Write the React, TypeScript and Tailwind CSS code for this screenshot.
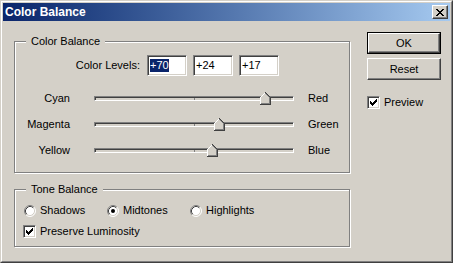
import React from 'react'

const sunken =
  'border-t border-l border-t-[#808080] border-l-[#808080] border-b border-r border-b-white border-r-white shadow-[inset_1px_1px_0_#404040,inset_-1px_-1px_0_#d4d0c8]'
const raised =
  'border-t border-l border-t-white border-l-white border-b border-r border-b-[#404040] border-r-[#404040] shadow-[inset_-1px_-1px_0_#808080]'
const etched = 'border border-[#808080] shadow-[inset_1px_1px_0_#fff,1px_1px_0_#fff]'

const CHECK = ['......x', '.....xx', 'x...xxx', 'xx.xxx.', 'xxxxx..', '.xxx...', '..x....']
const CLOSE = ['xx....xx', '.xx..xx.', '..xxxx..', '...xx...', '..xxxx..', '.xx..xx.', 'xx....xx']

function PixelGlyph({ rows }: { rows: string[] }) {
  const w = rows[0].length
  return (
    <svg width={w} height={rows.length} shapeRendering="crispEdges">
      {rows.map((r, y) =>
        r.split('').map((c, x) => (c === 'x' ? <rect key={`${x}-${y}`} x={x} y={y} width={1} height={1} fill="#000" /> : null))
      )}
    </svg>
  )
}

function Checkbox() {
  return (
    <div className={`w-[13px] h-[13px] shrink-0 bg-white flex items-center justify-center ${sunken}`}>
      <PixelGlyph rows={CHECK} />
    </div>
  )
}

function Radio({ checked }: { checked?: boolean }) {
  return (
    <svg width={12} height={12} className="shrink-0">
      <circle cx={6} cy={6} r={5} fill="#fff" />
      <path d="M2.11 9.89 A5.5 5.5 0 0 1 9.89 2.11" stroke="#808080" fill="none" />
      <path d="M9.89 2.11 A5.5 5.5 0 0 1 2.11 9.89" stroke="#fff" fill="none" />
      <path d="M2.82 9.18 A4.5 4.5 0 0 1 9.18 2.82" stroke="#404040" fill="none" />
      <path d="M9.18 2.82 A4.5 4.5 0 0 1 2.82 9.18" stroke="#d4d0c8" fill="none" />
      {checked && <circle cx={6} cy={6} r={2} fill="#000" />}
    </svg>
  )
}

function Thumb() {
  return (
    <svg width={11} height={13} shapeRendering="crispEdges">
      <polygon points="5.5,0.5 10.5,5.5 10.5,12.5 0.5,12.5 0.5,5.5" fill="#d4d0c8" />
      <path d="M0.5 12 L0.5 5.5 L5.5 0.5" stroke="#fff" fill="none" />
      <path d="M5.5 0.5 L10.5 5.5 L10.5 12.5 L0 12.5" stroke="#404040" fill="none" />
      <path d="M5.5 1.5 L9.5 5.5 L9.5 11.5 L1 11.5" stroke="#808080" fill="none" />
    </svg>
  )
}

const sliders = [
  { left: 'Cyan', right: 'Red', value: 70 },
  { left: 'Magenta', right: 'Green', value: 24 },
  { left: 'Yellow', right: 'Blue', value: 17 },
]

function Button({ label, isDefault }: { label: string; isDefault?: boolean }) {
  const inner = (
    <div className={`h-full w-full bg-[#d4d0c8] flex items-center justify-center ${raised}`}>{label}</div>
  )
  if (isDefault) return <div className="h-[22px] w-[74px] border border-black">{inner}</div>
  return <div className="h-[22px] w-[74px]">{inner}</div>
}

export default function App() {
  return (
    <div className="w-[453px] h-[263px] font-['Liberation_Sans',Arial,sans-serif] text-[11px] leading-[13px] text-black">
      <div className="h-full border border-t-[#d4d0c8] border-l-[#d4d0c8] border-b-[#404040] border-r-[#404040]">
        <div className="h-full border border-t-white border-l-white border-b-[#808080] border-r-[#808080] bg-[#d4d0c8] p-px">
          {/* title bar */}
          <div className="h-[18px] bg-gradient-to-r from-[#0a246a] to-[#a6caf0] flex items-center justify-between pl-[2px] pr-[2px]">
            <span className="text-white font-bold text-[12px]">Color Balance</span>
            <div className={`w-[16px] h-[14px] bg-[#d4d0c8] flex items-center justify-center ${raised}`}>
              <PixelGlyph rows={CLOSE} />
            </div>
          </div>

          <div className="flex pl-[11px]">
            {/* left column */}
            <div className="w-[336px] pt-[20px]">
              <div className={`relative h-[132px] pt-[13px] ${etched}`}>
                <span className="absolute left-[11px] top-[-7px] px-[5px] bg-[#d4d0c8]">Color Balance</span>
                <div className="flex items-center h-[21px]">
                  <span className="w-[125px] text-right">Color Levels:</span>
                  <div className="flex gap-[6px] ml-[7px]">
                    {['+70', '+24', '+17'].map((v, i) => (
                      <div key={v} className={`w-[40px] h-[21px] bg-white flex items-center pl-[2px] ${sunken}`}>
                        <span className={i === 0 ? 'bg-[#0a246a] text-white' : ''}>{v}</span>
                      </div>
                    ))}
                  </div>
                </div>
                <div className="mt-[9px]">
                  {sliders.map(s => (
                    <div key={s.left} className="flex items-center h-[26px]">
                      <span className="w-[55px] text-right">{s.left}</span>
                      <div className={`relative ml-[24px] w-[200px] h-[5px] bg-[#d4d0c8] ${sunken}`}>
                        <div className="absolute left-[99px] top-[1px] w-px h-[2px] bg-[#808080]" />
                        <div className="absolute top-[-5px] leading-none" style={{ left: 95 + s.value }}>
                          <Thumb />
                        </div>
                      </div>
                      <span className="ml-[14px]">{s.right}</span>
                    </div>
                  ))}
                </div>
              </div>

              <div className={`relative mt-[16px] h-[58px] pt-[14px] ${etched}`}>
                <span className="absolute left-[11px] top-[-7px] px-[5px] bg-[#d4d0c8]">Tone Balance</span>
                <div className="flex h-[13px] pl-[9px]">
                  {[
                    { label: 'Shadows', checked: false },
                    { label: 'Midtones', checked: true },
                    { label: 'Highlights', checked: false },
                  ].map(r => (
                    <div key={r.label} className="w-[83px] flex items-center gap-[4px]">
                      <Radio checked={r.checked} />
                      <span>{r.label}</span>
                    </div>
                  ))}
                </div>
                <div className="flex items-center gap-[4px] h-[13px] mt-[8px] pl-[8px]">
                  <Checkbox />
                  <span>Preserve Luminosity</span>
                </div>
              </div>
            </div>

            {/* right column */}
            <div className="ml-[17px] w-[74px] pt-[11px]">
              <Button label="OK" isDefault />
              <div className="mt-[4px]">
                <Button label="Reset" />
              </div>
              <div className="mt-[16px] flex items-center gap-[4px]">
                <Checkbox />
                <span>Preview</span>
              </div>
            </div>
          </div>
        </div>
      </div>
    </div>
  )
}
